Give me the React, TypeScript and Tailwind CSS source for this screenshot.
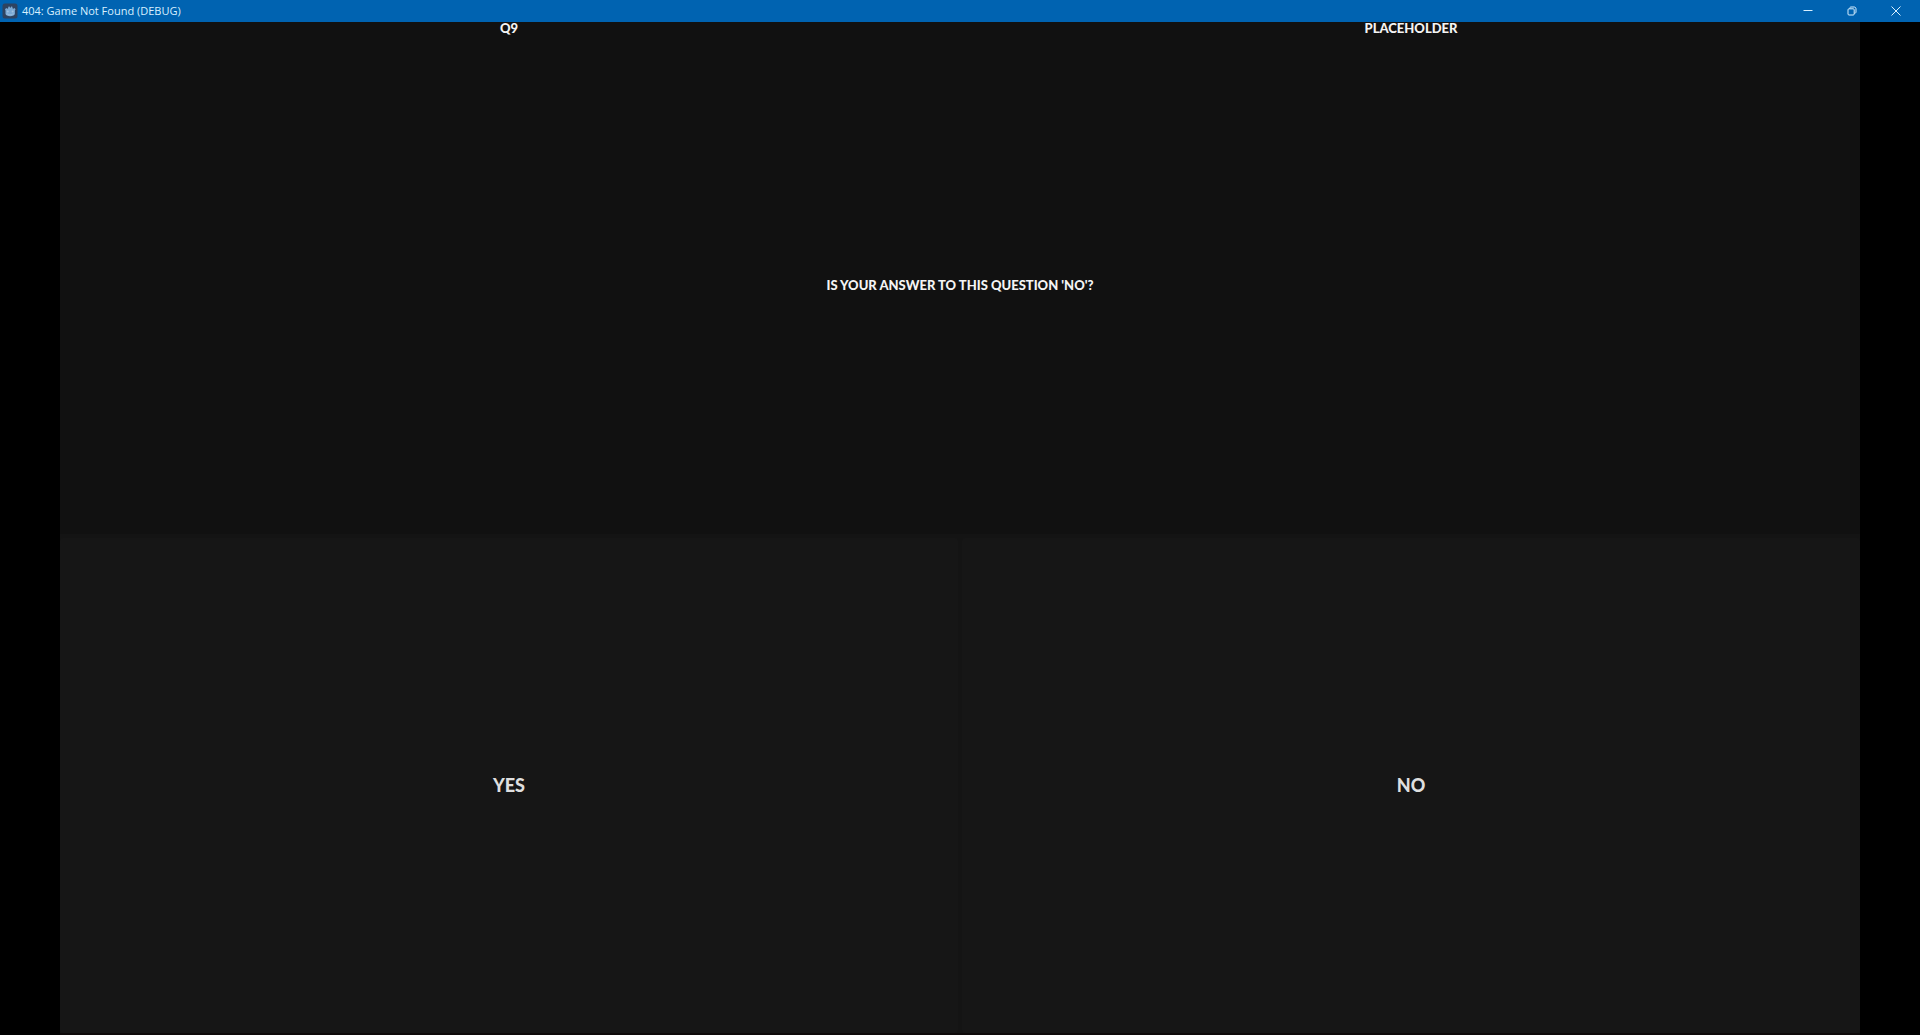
import React from "react";

const answers = ["YES", "NO"];

function GodotIcon() {
    return (
        <svg viewBox="0 0 16 16" className="h-4 w-4 shrink-0" aria-hidden="true">
            <rect x="0.5" y="0.5" width="15" height="15" rx="2.5" fill="#363d52" fillOpacity="0.85" />
            <path
                d="M3 6.2 4.3 5l1 .7.9-.4.1-1.5 1.3-.3.4 1.2 .6 0 .5-1.2 1.3.3.1 1.5.9.4 1-.7L13.5 6.2l-.6 1.2v3.4c0 1.5-2.2 2.4-4.7 2.4s-4.7-.9-4.7-2.4V7.4z"
                fill="#7ba9d4"
            />
            <circle cx="5.8" cy="8.6" r="1" fill="#a3c3e0" />
            <circle cx="10.6" cy="8.6" r="1" fill="#a3c3e0" />
            <path d="M4.4 11h1.7l.3.8h3.6l.3-.8H12" fill="none" stroke="#a9c9e6" strokeWidth="0.6" />
        </svg>
    );
}

function TitleBar() {
    return (
        <header className="flex h-[22px] shrink-0 items-center bg-[#0063b1] px-0.5 text-[#d8f0ff]">
            <GodotIcon />
            <h1 className="ml-1 flex-1 font-['Open_Sans','Noto_Sans',sans-serif] text-[11px] leading-[22px]">
                404: Game Not Found (DEBUG)
            </h1>
            <div className="flex h-full">
                <button type="button" aria-label="Minimize" className="flex w-11 items-center justify-center">
                    <svg viewBox="0 0 10 10" className="h-[10px] w-[10px]" fill="none" stroke="currentColor">
                        <path d="M0.5 4.5h9" />
                    </svg>
                </button>
                <button type="button" aria-label="Restore" className="flex w-11 items-center justify-center">
                    <svg viewBox="0 0 10 10" className="h-[10px] w-[10px]" fill="none" stroke="currentColor">
                        <rect x="1" y="2.8" width="6.2" height="6.2" rx="1" />
                        <path d="M2.8 2.6C2.8 1.4 3.2 1 4 1h3c1.3 0 2 .7 2 2v3c0 .8-.5 1.2-1.6 1.2" />
                    </svg>
                </button>
                <button type="button" aria-label="Close" className="flex w-11 items-center justify-center">
                    <svg viewBox="0 0 10 10" className="h-[10px] w-[10px]" fill="none" stroke="currentColor">
                        <path d="M0.5 0.5l9 9M9.5 0.5l-9 9" />
                    </svg>
                </button>
            </div>
        </header>
    );
}

export default function App() {
    return (
        <div className="flex h-screen flex-col overflow-hidden bg-black font-['Lato',sans-serif]">
            <TitleBar />

            {/* Letterboxed game viewport */}
            <main className="mx-[60px] flex min-h-0 flex-1 flex-col bg-[#111111] text-[13px] font-black text-[#f4f4f4]">
                <div className="grid grid-cols-2 gap-1 text-center leading-[12px]">
                    <p>Q9</p>
                    <p>PLACEHOLDER</p>
                </div>

                <section className="flex flex-1 items-center justify-center pt-1">
                    <h2>IS YOUR ANSWER TO THIS QUESTION 'NO'?</h2>
                </section>

                {/* Answers */}
                <div className="grid flex-1 grid-cols-2 gap-1 border-b-2 border-[#0e0a0a] bg-[#141414] pt-1">
                    {answers.map((answer) => (
                        <button
                            key={answer}
                            type="button"
                            className="rounded-[3px] bg-[#161616] text-[18px] text-[#dfdfdf]"
                        >
                            {answer}
                        </button>
                    ))}
                </div>
            </main>
        </div>
    );
}
